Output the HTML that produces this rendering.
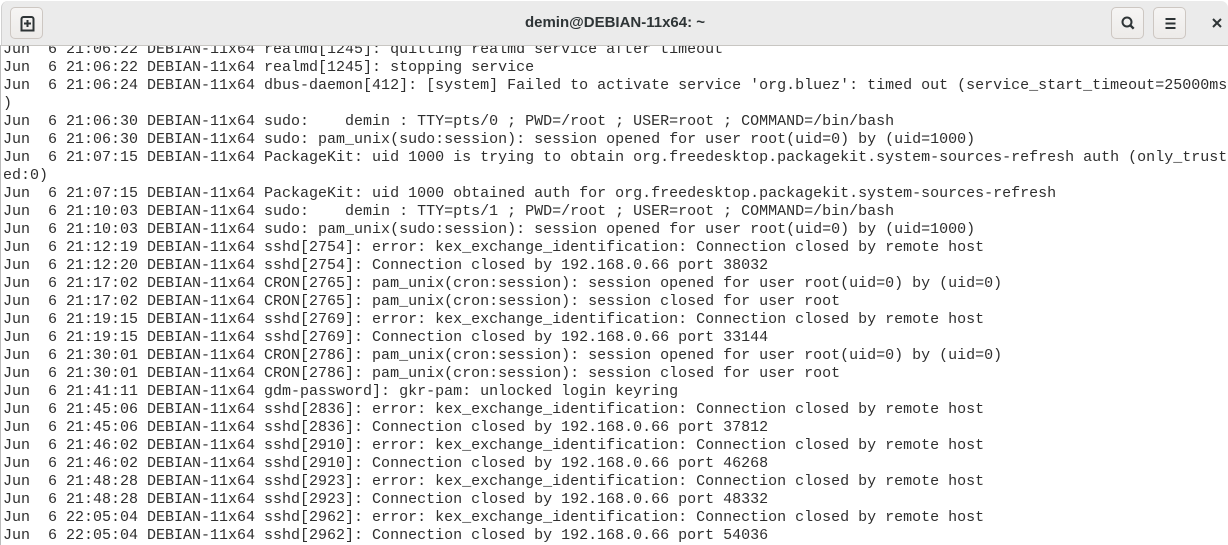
<!DOCTYPE html>
<html><head><style>
html,body{margin:0;padding:0;width:1228px;height:545px;overflow:hidden;background:#fff}
.term{position:absolute;left:3px;top:41px;font-family:"Liberation Mono",monospace;font-size:15px;line-height:18px;color:#2e2e2e;white-space:pre}
.hdr{position:absolute;left:1px;top:1px;right:0;height:44px;background:#ebebeb;border-bottom:1px solid #c8c6c2;border-top-left-radius:7px;border-top-right-radius:7px;z-index:2;border-left:1px solid #d0d0d0}
.title{position:absolute;left:0;right:0;top:13px;text-align:center;font-family:"Liberation Sans",sans-serif;font-size:15px;font-weight:bold;color:#2e3436}
.btn{position:absolute;top:6px;width:33px;height:32px;border:1px solid #cdc7c2;border-radius:5px;background:linear-gradient(#f6f5f4,#edebe9);box-sizing:border-box}
.lb{position:absolute;left:0;top:45px;width:1px;height:500px;background:#bbb}
</style></head><body>
<div class="lb"></div>
<div class="hdr">
<div class="btn" style="left:8px"><svg width="33" height="32" viewBox="0 0 33 32"><path d="M10.5 22.5V11a2 2 0 0 1 2-2h8a2 2 0 0 1 2 2v11.5" fill="none" stroke="#2e3436" stroke-width="2"/><path d="M9.5 22.5h14" stroke="#2e3436" stroke-width="2"/><path d="M16.5 12v7M13 15.5h7" stroke="#2e3436" stroke-width="2"/></svg></div>
<div class="title">demin@DEBIAN-11x64: ~</div>
<div class="btn" style="left:1109px"><svg width="33" height="32" viewBox="0 0 33 32"><circle cx="15" cy="14" r="4.5" fill="none" stroke="#2e3436" stroke-width="2"/><path d="M18.2 17.2l3.5 3.5" stroke="#2e3436" stroke-width="2.4"/></svg></div>
<div class="btn" style="left:1151px"><svg width="33" height="32" viewBox="0 0 33 32"><path d="M11.5 11h10M11.5 15.5h10M11.5 20h10" stroke="#2e3436" stroke-width="2"/></svg></div>
<svg style="position:absolute;left:1209px;top:16px" width="12" height="12" viewBox="0 0 12 12"><path d="M2 2l8 8M10 2l-8 8" stroke="#2e3436" stroke-width="2"/></svg>
</div>
<div class="term">Jun  6 21:06:22 DEBIAN-11x64 realmd[1245]: quitting realmd service after timeout
Jun  6 21:06:22 DEBIAN-11x64 realmd[1245]: stopping service
Jun  6 21:06:24 DEBIAN-11x64 dbus-daemon[412]: [system] Failed to activate service 'org.bluez': timed out (service_start_timeout=25000ms
)
Jun  6 21:06:30 DEBIAN-11x64 sudo:    demin : TTY=pts/0 ; PWD=/root ; USER=root ; COMMAND=/bin/bash
Jun  6 21:06:30 DEBIAN-11x64 sudo: pam_unix(sudo:session): session opened for user root(uid=0) by (uid=1000)
Jun  6 21:07:15 DEBIAN-11x64 PackageKit: uid 1000 is trying to obtain org.freedesktop.packagekit.system-sources-refresh auth (only_trust
ed:0)
Jun  6 21:07:15 DEBIAN-11x64 PackageKit: uid 1000 obtained auth for org.freedesktop.packagekit.system-sources-refresh
Jun  6 21:10:03 DEBIAN-11x64 sudo:    demin : TTY=pts/1 ; PWD=/root ; USER=root ; COMMAND=/bin/bash
Jun  6 21:10:03 DEBIAN-11x64 sudo: pam_unix(sudo:session): session opened for user root(uid=0) by (uid=1000)
Jun  6 21:12:19 DEBIAN-11x64 sshd[2754]: error: kex_exchange_identification: Connection closed by remote host
Jun  6 21:12:20 DEBIAN-11x64 sshd[2754]: Connection closed by 192.168.0.66 port 38032
Jun  6 21:17:02 DEBIAN-11x64 CRON[2765]: pam_unix(cron:session): session opened for user root(uid=0) by (uid=0)
Jun  6 21:17:02 DEBIAN-11x64 CRON[2765]: pam_unix(cron:session): session closed for user root
Jun  6 21:19:15 DEBIAN-11x64 sshd[2769]: error: kex_exchange_identification: Connection closed by remote host
Jun  6 21:19:15 DEBIAN-11x64 sshd[2769]: Connection closed by 192.168.0.66 port 33144
Jun  6 21:30:01 DEBIAN-11x64 CRON[2786]: pam_unix(cron:session): session opened for user root(uid=0) by (uid=0)
Jun  6 21:30:01 DEBIAN-11x64 CRON[2786]: pam_unix(cron:session): session closed for user root
Jun  6 21:41:11 DEBIAN-11x64 gdm-password]: gkr-pam: unlocked login keyring
Jun  6 21:45:06 DEBIAN-11x64 sshd[2836]: error: kex_exchange_identification: Connection closed by remote host
Jun  6 21:45:06 DEBIAN-11x64 sshd[2836]: Connection closed by 192.168.0.66 port 37812
Jun  6 21:46:02 DEBIAN-11x64 sshd[2910]: error: kex_exchange_identification: Connection closed by remote host
Jun  6 21:46:02 DEBIAN-11x64 sshd[2910]: Connection closed by 192.168.0.66 port 46268
Jun  6 21:48:28 DEBIAN-11x64 sshd[2923]: error: kex_exchange_identification: Connection closed by remote host
Jun  6 21:48:28 DEBIAN-11x64 sshd[2923]: Connection closed by 192.168.0.66 port 48332
Jun  6 22:05:04 DEBIAN-11x64 sshd[2962]: error: kex_exchange_identification: Connection closed by remote host
Jun  6 22:05:04 DEBIAN-11x64 sshd[2962]: Connection closed by 192.168.0.66 port 54036</div>
</body></html>
